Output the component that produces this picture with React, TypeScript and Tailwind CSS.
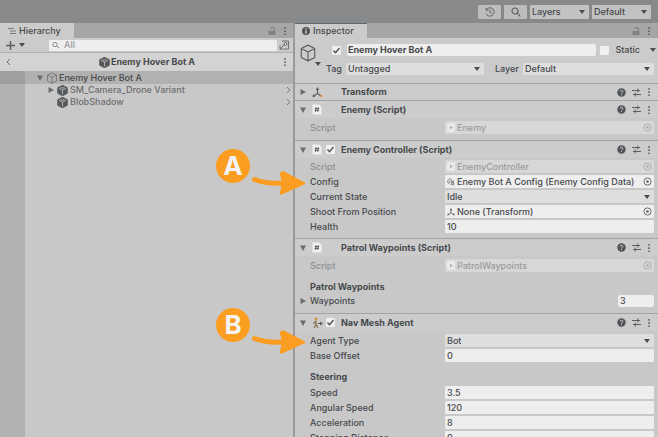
import { useId, type ReactNode } from "react";

function Caret({ className = "" }: { className?: string }) {
  return (
    <svg viewBox="0 0 6 4" className={`h-1 w-1.5 shrink-0 fill-[#4b4d50] ${className}`} aria-hidden="true">
      <path d="M0 0h6L3 4z" />
    </svg>
  );
}

function Foldout({ open = false }: { open?: boolean }) {
  return (
    <svg viewBox="0 0 8 8" className="h-2 w-2 shrink-0 fill-[#6a6c6e]" aria-hidden="true">
      {open ? <path d="M1 1.500h6L4 7z" /> : <path d="M1.500 1v6L7 4z" />}
    </svg>
  );
}

function Cube({ className }: { className: string }) {
  return (
    <svg viewBox="0 0 16 16" className={`shrink-0 ${className}`} fill="none" stroke="currentColor" strokeLinejoin="round" aria-hidden="true">
      <path d="M8 1l6 3v8l-6 3-6-3V4zM2 4l6 3.200L14 4M8 7.200V15" />
    </svg>
  );
}

function PrefabCube() {
  return (
    <svg viewBox="0 0 12 12" className="h-[11px] w-[11px] shrink-0" aria-hidden="true">
      <path d="M6 .3l5.200 2.600v6.200L6 11.700.8 9.100V2.900z" fill="#55585b" stroke="#55585b" strokeLinejoin="round" />
      <path d="M2.200 3.600L6 5.600l3.800-2M6 5.600v4.600M3.800 2.500L6 3.500l2.200-1" fill="none" stroke="#c4c4c4" strokeWidth=".9" />
    </svg>
  );
}

function Kebab() {
  return (
    <svg viewBox="0 0 4 10" className="h-2.5 w-1 shrink-0 fill-[#5c5e60]" aria-hidden="true">
      <path d="M1.300 1h1.500v1.700H1.300zM1.300 4.200h1.500v1.700H1.300zM1.300 7.400h1.500v1.700H1.300z" />
    </svg>
  );
}

function Lock() {
  return (
    <svg viewBox="0 0 10 10" className="h-2.5 w-2.5 shrink-0" aria-hidden="true">
      <path d="M1.500 5h7v4h-7z" fill="#7f8183" />
      <path d="M3.800 2.800c0-2 3.400-2 3.400 0V5" fill="none" stroke="#7f8183" strokeWidth="1.200" />
    </svg>
  );
}

function Picker({ dim = false }: { dim?: boolean }) {
  return (
    <svg viewBox="0 0 10 10" className={`h-[9px] w-[9px] shrink-0 ${dim ? "text-[#a9a9a9]" : "text-[#5f6163]"}`} aria-hidden="true">
      <circle cx="5" cy="5" r="4" fill="none" stroke="currentColor" />
      <circle cx="5" cy="5" r="1.400" fill="currentColor" />
    </svg>
  );
}

function ScriptIcon() {
  return (
    <svg viewBox="0 0 10 11" className="h-[11px] w-2.5 shrink-0" aria-hidden="true">
      <path d="M.5.500h6.500l2.500 2.500v7.500h-9z" fill="#f0f0f0" />
      <path d="M4 3.200l-.5 4.600M6.300 3.200l-.5 4.600M2.800 4.600h4.400M2.600 6.400H7" fill="none" stroke="#606264" />
    </svg>
  );
}

function MiniScript() {
  return (
    <svg viewBox="0 0 8 9" className="h-[9px] w-2 shrink-0" aria-hidden="true">
      <path d="M0 0h8v9H0z" fill="#e9e9e9" />
      <path d="M3 3l3 1.500L3 6z" fill="#a5a5a5" />
    </svg>
  );
}

function Axes({ color = false, className }: { color?: boolean; className: string }) {
  return (
    <svg viewBox="0 0 11 11" className={`shrink-0 ${className}`} aria-hidden="true">
      <path d="M5.500 2v4.500L2 9M5.500 6.500L9 9" fill="none" stroke="#5c5e60" strokeWidth="1.200" />
      <path d="M5.500 0l1.800 3H3.700zM.3 10.200l1-3.200 2 2.600z" fill="#5c5e60" />
      <path d="M10.700 10.200l-1-3.200-2 2.600z" fill={color ? "#d99a3c" : "#5c5e60"} />
    </svg>
  );
}

function AgentIcon() {
  return (
    <svg viewBox="0 0 11 12" className="h-3 w-[11px] shrink-0" aria-hidden="true">
      <circle cx="4" cy="1.800" r="1.500" fill="#cf9645" />
      <path d="M4 3.500v3.800L2 11M4 7.300L6 11M1.300 6.500L4 4.200" fill="none" stroke="#8c744f" strokeWidth="1.300" />
      <path d="M6 6.500h3" stroke="#5c5e60" />
      <path d="M8 4.500l3 2-3 2z" fill="#5c5e60" />
    </svg>
  );
}

function ConfigIcon() {
  return (
    <svg viewBox="0 0 10 10" className="h-[9px] w-2 shrink-0" fill="none" stroke="#6c6e70" aria-hidden="true">
      <path d="M1 3.500L3.500 1.500 6 3v3M1 3.500v3L3 8M3.500 4v3" />
      <path d="M5 4.500l4 4M8 4v5H5z" />
    </svg>
  );
}

function HeaderTools() {
  return (
    <div className="ml-auto flex items-center gap-1.5 pr-[7px]">
      <svg viewBox="0 0 9 9" className="h-[9px] w-[9px]" aria-hidden="true">
        <circle cx="4.500" cy="4.500" r="4.200" fill="#505356" />
        <path d="M3.200 3.500c0-1.700 2.700-1.600 2.700 0 0 .9-1.400.9-1.400 2M4.500 6.200v1" fill="none" stroke="#d0d0d0" />
      </svg>
      <svg viewBox="0 0 9 9" className="h-[9px] w-[9px]" fill="none" stroke="#5c5e60" aria-hidden="true">
        <path d="M0 2.500h8M1 6.500h8M5.800.5v4M3.200 4.500v4" />
      </svg>
      <Kebab />
    </div>
  );
}

function Tick({ label, checked = false }: { label: string; checked?: boolean }) {
  return (
    <span className="grid h-[9px] w-[9px] shrink-0">
      <input
        type="checkbox"
        aria-label={label}
        defaultChecked={checked}
        className="peer col-start-1 row-start-1 h-[9px] w-[9px] appearance-none rounded-[1px] bg-[#f0f0f0]"
      />
      <svg viewBox="0 0 9 9" className="pointer-events-none invisible col-start-1 row-start-1 peer-checked:visible" aria-hidden="true">
        <path d="M1.500 4.500l2 2.200L7.500 2" fill="none" stroke="#4b4d50" strokeWidth="1.300" />
      </svg>
    </span>
  );
}

function Select({ id, label, value, className }: { id?: string; label?: string; value: string; className: string }) {
  return (
    <span className={`grid min-w-0 items-center rounded-[1px] ${className}`}>
      <select id={id} aria-label={label} className="col-start-1 row-start-1 h-full w-full min-w-0 appearance-none pl-0.5 leading-3">
        <option>{value}</option>
      </select>
      <Caret className="pointer-events-none col-start-1 row-start-1 mr-1 justify-self-end" />
    </span>
  );
}

type FieldProps = { label: string; value: string; kind?: "text" | "select" | "script" | "object"; icon?: ReactNode };

function Field({ label, value, kind = "text", icon }: FieldProps) {
  const id = useId();
  const dim = kind === "script";
  return (
    <div className="grid h-[15px] grid-cols-[135px_1fr] items-center pr-1 pl-[15px]">
      <label htmlFor={id} className={`whitespace-nowrap ${dim ? "text-[#909090]" : ""}`}>
        {label}
      </label>
      {kind === "text" && <input id={id} defaultValue={value} className="h-[13px] min-w-0 rounded-[1px] bg-[#eee] px-0.5" />}
      {kind === "select" && <Select id={id} value={value} className="h-[13px] bg-[#dedede]" />}
      {(dim || kind === "object") && (
        <div className={`flex h-[13px] min-w-0 items-center gap-0.5 rounded-[1px] px-0.5 ${dim ? "bg-[#d7d7d7] text-[#9b9b9b]" : "bg-[#eee]"}`}>
          {dim ? <MiniScript /> : icon}
          <input id={id} readOnly disabled={dim} value={value} className="min-w-0 flex-1 bg-transparent" />
          <Picker dim={dim} />
        </div>
      )}
    </div>
  );
}

function Component({ title, icon, enabled, open = true, children }: { title: string; icon: ReactNode; enabled?: boolean; open?: boolean; children?: ReactNode }) {
  return (
    <section className="border-t border-[#a3a3a3]">
      <header className={`flex items-center bg-[#cccccc] pl-1 ${open ? "h-[17px]" : "h-4"}`}>
        <Foldout open={open} />
        <span className="ml-1 flex w-3 justify-center">{icon}</span>
        <span className="ml-0.5 flex w-4 pl-px">{enabled && <Tick label={`${title} enabled`} checked />}</span>
        <h2 className="font-bold whitespace-nowrap">{title}</h2>
        <HeaderTools />
      </header>
      {children}
    </section>
  );
}

function Callout({ letter, className }: { letter: string; className: string }) {
  return (
    <div className={`absolute left-[216px] flex ${className}`}>
      <span className="flex h-[34px] w-[34px] items-center justify-center rounded-full bg-[#fb9d20] text-[26px] leading-none font-bold text-[#f3f3f3]">
        {letter}
      </span>
      <svg viewBox="0 0 58 26" className="mt-[21px] h-[26px] w-[58px]" aria-hidden="true">
        <path d="M4.500 9.500Q16 14 34 13" fill="none" stroke="#fb9d20" strokeWidth="5" strokeLinecap="round" />
        <path d="M31 2Q29 3 30 5Q33 12 30 22Q29 26 33 24L54 14.500Q57 13 54 12L34 1.500Q32 1 31 2z" fill="#fb9d20" />
      </svg>
    </div>
  );
}

function TreeRow({ name, chevron = false, foldout = false }: { name: string; chevron?: boolean; foldout?: boolean }) {
  return (
    <li className="flex h-3 items-center pr-0.5 text-[#6c6e70]">
      <span className="h-full w-[25px] shrink-0 bg-[#b2b2b2]" />
      <span className="ml-[22px] flex w-[10px] shrink-0">{foldout && <Foldout />}</span>
      <PrefabCube />
      <span className="ml-0.5 whitespace-nowrap">{name}</span>
      {chevron && (
        <svg viewBox="0 0 5 8" className="ml-auto h-2 w-[5px]" fill="none" stroke="#77797b" aria-hidden="true">
          <path d="M1 1l3 3-3 3" />
        </svg>
      )}
    </li>
  );
}

function Hierarchy() {
  return (
    <aside className="flex min-w-0 flex-col border-r-2 border-[#999] bg-[#c8c8c8]">
      <div className="flex h-[15px] items-center bg-[#a6a6a6] pr-1.5">
        <button className="flex h-full w-[74px] items-center gap-[3px] bg-[#cbcbcb] pl-2">
          <svg viewBox="0 0 8 8" className="h-2 w-2" stroke="#77797b" aria-hidden="true">
            <path d="M0 1.500h6M2 4h6M2 6.500h6" />
          </svg>
          Hierarchy
        </button>
        <span className="ml-auto flex items-center gap-1.5">
          <Lock />
          <Kebab />
        </span>
      </div>
      <div className="flex h-[15px] items-center border-b border-[#b0b0b0] bg-[#cbcbcb] pr-1 pl-1.5">
        <button aria-label="Create" className="flex items-center gap-1">
          <svg viewBox="0 0 9 9" className="h-[9px] w-[9px]" stroke="#5c5e60" strokeWidth="1.500" aria-hidden="true">
            <path d="M4.500 0v9M0 4.500h9" />
          </svg>
          <Caret />
        </button>
        <div className="ml-6 flex h-[11px] min-w-0 flex-1 items-center gap-1 rounded-[1px] bg-[#eee] pl-[3px]">
          <svg viewBox="0 0 8 8" className="h-2 w-2 shrink-0" fill="none" stroke="#8a8c8e" aria-hidden="true">
            <circle cx="3" cy="3.500" r="2.200" />
            <path d="M4.800 5L7 7" />
          </svg>
          <input aria-label="Search hierarchy" placeholder="All" className="min-w-0 flex-1 placeholder:text-[#999]" />
        </div>
        <svg viewBox="0 0 10 10" className="ml-0.5 h-2.5 w-2.5" fill="none" stroke="#6c6e70" aria-hidden="true">
          <path d="M3 1h6.500v8H5M1 9l5-5M1 5.500V9h3.500" />
          <circle cx="6.500" cy="4" r="1.500" />
        </svg>
      </div>
      <div className="flex h-[18px] items-center bg-[#d3d3d3] pr-1.5 pl-1.5">
        <svg viewBox="0 0 5 8" className="h-2 w-[5px]" fill="none" stroke="#6c6e70" aria-hidden="true">
          <path d="M4 1L1 4l3 3" />
        </svg>
        <span className="flex flex-1 items-center justify-center gap-px font-bold">
          <PrefabCube />
          Enemy Hover Bot A
        </span>
        <Kebab />
      </div>
      <ul className="flex flex-1 flex-col">
        <li className="flex h-[13px] items-center bg-[#b1b1b1]">
          <span className="h-full w-[25px] shrink-0 bg-[#9f9f9f]" />
          <span className="ml-[11px] flex">
            <Foldout open />
          </span>
          <Cube className="ml-0.5 h-3 w-3 text-[#6a6c6e]" />
          <span className="ml-px whitespace-nowrap">Enemy Hover Bot A</span>
        </li>
        <TreeRow name="SM_Camera_Drone Variant" chevron foldout />
        <TreeRow name="BlobShadow" chevron />
        <li className="w-[25px] flex-1 bg-[#b2b2b2]" aria-hidden="true" />
      </ul>
    </aside>
  );
}

function Inspector() {
  return (
    <main className="min-w-0 bg-[#c8c8c8]">
      <div className="flex h-[15px] items-center bg-[#a6a6a6] pr-[7px]">
        <button className="flex h-full w-[72px] items-center gap-[3px] border-t border-[#62676c] bg-[#cbcbcb] pl-[7px]">
          <svg viewBox="0 0 8 8" className="h-2 w-2" aria-hidden="true">
            <circle cx="4" cy="4" r="4" fill="#505356" />
            <path d="M4 1.300v1.200M4 3.300v3.400" stroke="#e0e0e0" strokeWidth="1.200" />
          </svg>
          Inspector
        </button>
        <span className="ml-auto flex items-center gap-1.5">
          <Lock />
          <Kebab />
        </span>
      </div>
      <div className="flex h-[45px] bg-[#cbcbcb] pt-1.5">
        <div className="flex w-[26px] shrink-0 flex-col pl-1">
          <Cube className="h-[18px] w-[18px] text-[#5c5e60]" />
          <Caret className="ml-4" />
        </div>
        <div className="flex min-w-0 flex-1 flex-col gap-1.5">
          <div className="flex h-3 items-center pr-0.5">
            <span className="ml-[11px] flex">
              <Tick label="Active" checked />
            </span>
            <input aria-label="Name" defaultValue="Enemy Hover Bot A" className="ml-1.5 h-3 min-w-0 flex-1 rounded-[2px] bg-[#eee] px-px font-bold" />
            <label className="ml-1 flex items-center gap-1.5">
              <Tick label="Static" />
              Static
            </label>
            <Caret className="ml-2.5" />
          </div>
          <div className="flex h-[13px] items-center pr-1 pl-[5px]">
            <label htmlFor="tag" className="w-5">Tag</label>
            <Select id="tag" value="Untagged" className="h-3 flex-[138] bg-[#dedede]" />
            <label htmlFor="layer" className="ml-[11px] w-[28px]">Layer</label>
            <Select id="layer" value="Default" className="h-3 flex-[131] bg-[#dedede]" />
          </div>
        </div>
      </div>
      <Component title="Transform" icon={<Axes color className="h-[11px] w-[11px]" />} open={false} />
      <Component title="Enemy (Script)" icon={<ScriptIcon />}>
        <div className="pt-0.5 pb-[5px]">
          <Field label="Script" value="Enemy" kind="script" />
        </div>
      </Component>
      <Component title="Enemy Controller (Script)" icon={<ScriptIcon />} enabled>
        <div className="pt-px pb-1">
          <Field label="Script" value="EnemyController" kind="script" />
          <Field label="Config" value="Enemy Bot A Config (Enemy Config Data)" kind="object" icon={<ConfigIcon />} />
          <Field label="Current State" value="Idle" kind="select" />
          <Field label="Shoot From Position" value="None (Transform)" kind="object" icon={<Axes className="h-2 w-2" />} />
          <Field label="Health" value="10" />
        </div>
      </Component>
      <Component title="Patrol Waypoints (Script)" icon={<ScriptIcon />}>
        <div className="pt-0.5 pb-1.5">
          <Field label="Script" value="PatrolWaypoints" kind="script" />
          <h3 className="mt-[7px] h-3.5 pl-[15px] leading-[14px] font-bold">Patrol Waypoints</h3>
          <div className="flex h-[13px] items-center pr-1 pl-1">
            <Foldout />
            <label htmlFor="waypoints" className="ml-[3px]">Waypoints</label>
            <input id="waypoints" defaultValue="3" className="ml-auto h-3 w-9 rounded-[2px] bg-[#eee] px-0.5" />
          </div>
        </div>
      </Component>
      <Component title="Nav Mesh Agent" icon={<AgentIcon />} enabled>
        <div className="pt-0.5">
          <Field label="Agent Type" value="Bot" kind="select" />
          <Field label="Base Offset" value="0" />
          <h3 className="mt-1.5 h-4 pl-[15px] leading-4 font-bold">Steering</h3>
          <Field label="Speed" value="3.5" />
          <Field label="Angular Speed" value="120" />
          <Field label="Acceleration" value="8" />
          <Field label="Stopping Distance" value="0" />
        </div>
      </Component>
    </main>
  );
}

export default function App() {
  return (
    <div className="relative flex h-screen flex-col overflow-hidden bg-[#88898a] font-['Inter','Liberation_Sans',sans-serif] text-[9px] leading-3 font-medium text-[#46494c]">
      <nav className="flex h-[23px] shrink-0 items-center justify-end gap-[3px] pr-[7px]">
        <button aria-label="History" className="flex h-3.5 w-[23px] items-center justify-center rounded-[1px] bg-[#bcbcbc]">
          <svg viewBox="0 0 10 10" className="h-2.5 w-2.5" fill="none" stroke="#5f6163" aria-hidden="true">
            <path d="M1.500 2.500A4.200 4.200 0 1 1 1 6.500M1 .8v2.400h2.400M5 2.500V5.500l1.800 1" />
          </svg>
        </button>
        <button aria-label="Search" className="flex h-3.5 w-[23px] items-center justify-center rounded-[1px] bg-[#bcbcbc]">
          <svg viewBox="0 0 10 10" className="h-2.5 w-2.5" fill="none" stroke="#5f6163" strokeWidth="1.200" aria-hidden="true">
            <circle cx="4" cy="4" r="3" />
            <path d="M6.200 6.200L9.300 9.300" />
          </svg>
        </button>
        <Select label="Layers" value="Layers" className="h-3.5 w-[59px] bg-[#c2c2c2]" />
        <Select label="Layout" value="Default" className="h-3.5 w-[59px] bg-[#c2c2c2]" />
      </nav>
      <div className="grid min-h-0 flex-1 grid-cols-[295fr_363fr]">
        <Hierarchy />
        <Inspector />
      </div>
      <Callout letter="A" className="top-[149px]" />
      <Callout letter="B" className="top-[308px]" />
    </div>
  );
}
